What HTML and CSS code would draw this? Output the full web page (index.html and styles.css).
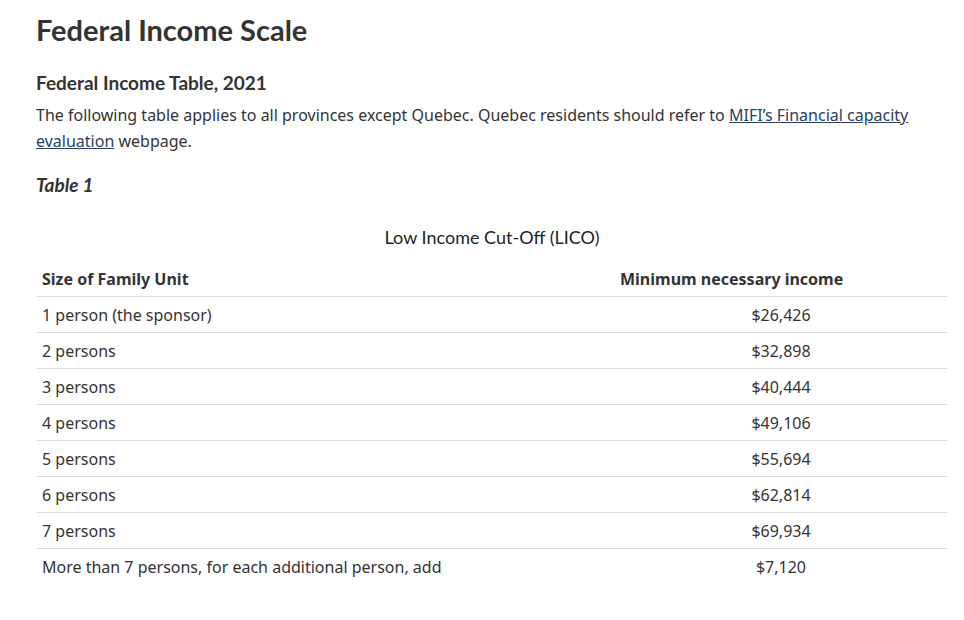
FILE: index.html
```html
<!DOCTYPE html>
<html lang="en">
<head>
<meta charset="utf-8">
<title>Federal Income Scale</title>
<link rel="stylesheet" href="styles.css">
</head>
<body>
<main class="page">
  <h1 class="title">Federal Income Scale</h1>
  <h2 class="subtitle">Federal Income Table, 2021</h2>
  <p class="intro">The following table applies to all provinces except Quebec. Quebec residents should refer to <a href="#" class="link">MIFI’s Financial capacity evaluation</a> webpage.</p>
  <p class="table-label">Table 1</p>
  <table class="lico">
    <caption class="lico-caption">Low Income Cut-Off (LICO)</caption>
    <colgroup><col class="col-size"><col class="col-income"></colgroup>
    <thead>
      <tr><th>Size of Family Unit</th><th>Minimum necessary income</th></tr>
    </thead>
    <tbody>
      <tr><td>1 person (the sponsor)</td><td class="amount">$26,426</td></tr>
      <tr><td>2 persons</td><td class="amount">$32,898</td></tr>
      <tr><td>3 persons</td><td class="amount">$40,444</td></tr>
      <tr><td>4 persons</td><td class="amount">$49,106</td></tr>
      <tr><td>5 persons</td><td class="amount">$55,694</td></tr>
      <tr><td>6 persons</td><td class="amount">$62,814</td></tr>
      <tr><td>7 persons</td><td class="amount">$69,934</td></tr>
      <tr><td>More than 7 persons, for each additional person, add</td><td class="amount">$7,120</td></tr>
    </tbody>
  </table>
</main>
</body>
</html>
```
FILE: styles.css
```css
html, body {
  margin: 0;
  padding: 0;
  background: #fff;
}
body {
  font-family: "Noto Sans", "DejaVu Sans", sans-serif;
  font-size: 16px;
  line-height: 26px;
  color: #333;
}
.page {
  width: 912px;
  margin: 0 0 0 36px;
  padding-top: 11px;
}
.title {
  font-family: Lato, sans-serif;
  font-weight: 700;
  font-size: 29px;
  line-height: 38px;
  margin: 0 0 21px;
  color: #333;
}
.subtitle {
  font-family: Lato, sans-serif;
  font-weight: 700;
  font-size: 19px;
  line-height: 26px;
  margin: 0 0 6px;
  color: #333;
}
.intro {
  margin: 0 0 18px;
}
.link {
  color: #284162;
  text-decoration: underline;
}
.table-label {
  font-family: Lato, sans-serif;
  font-style: italic;
  font-weight: 700;
  font-size: 19px;
  line-height: 26px;
  margin: 0 0 26px;
}
.lico {
  width: 912px;
  border-collapse: collapse;
  table-layout: fixed;
}
.lico-caption {
  font-family: Lato, sans-serif;
  font-size: 18px;
  line-height: 26px;
  color: #222;
  text-align: center;
  padding: 0 0 11px;
}
.col-size { width: 578px; }
.lico th,
.lico td {
  padding: 5px 6px 4px;
  line-height: 26px;
  text-align: left;
  vertical-align: top;
}
.lico th {
  font-weight: 700;
  border-bottom: 1px solid #ddd;
}
.lico tbody tr + tr td {
  border-top: 1px solid #ddd;
}
.lico td.amount {
  text-align: center;
}
```
